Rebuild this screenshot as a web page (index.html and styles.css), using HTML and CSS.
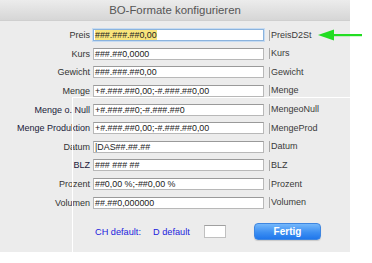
FILE: index.html
```html
<!DOCTYPE html>
<html>
<head>
<meta charset="utf-8">
<link rel="stylesheet" href="styles.css">
</head>
<body>
<div class="window">
  <div class="titlebar">BO-Formate konfigurieren</div>
  <div class="form">
    <div class="lbl">Preis</div><div class="field focus"><span class="sel">###.###.##0,00</span></div><div class="code">PreisD2St</div>
    <div class="lbl">Kurs</div><div class="field">###.##0,0000</div><div class="code">Kurs</div>
    <div class="lbl">Gewicht</div><div class="field">###.###.##0,00</div><div class="code">Gewicht</div>
    <div class="lbl">Menge</div><div class="field">+#.###.##0,00;-#.###.##0,00</div><div class="code">Menge</div>
    <div class="lbl dark">Menge o. Null</div><div class="field">+#.###.##0;-#.###.##0</div><div class="code">MengeoNull</div>
    <div class="lbl dark">Menge Produktion</div><div class="field">+#.###.##0,00;-#.###.##0,00</div><div class="code">MengeProd</div>
    <div class="lbl">Datum</div><div class="field">|DAS##.##.##</div><div class="code">Datum</div>
    <div class="lbl dark">BLZ</div><div class="field">### ### ##</div><div class="code">BLZ</div>
    <div class="lbl">Prozent</div><div class="field">##0,00 %;-##0,00 %</div><div class="code">Prozent</div>
    <div class="lbl">Volumen</div><div class="field">##.##0,000000</div><div class="code">Volumen</div>
  </div>
  <div class="footer">
    <span class="link ch">CH default:</span>
    <span class="link d">D default</span>
    <div class="smallbox"></div>
    <button class="btn">Fertig</button>
  </div>
  <div class="artifact"></div>
</div>
<svg class="arrow" width="44" height="12" viewBox="0 0 44 12">
  <polygon points="0,6 16,0.5 16,11.5" fill="#22dd22"/>
  <rect x="14" y="5" width="30" height="2.2" fill="#22dd22"/>
</svg>
</body>
</html>
```
FILE: styles.css
```css
html, body {
  margin: 0;
  padding: 0;
  background: #ffffff;
}
body {
  width: 372px;
  height: 263px;
  position: relative;
  overflow: hidden;
  font-family: "Liberation Sans", Arial, sans-serif;
}
.window {
  position: relative;
  width: 350px;
  height: 252px;
  background: #ececec;
}
.titlebar {
  height: 21px;
  box-sizing: border-box;
  background: linear-gradient(#ececec, #d6d6d6);
  border-bottom: 1px solid #cfcfcf;
  color: #555555;
  font-size: 11.4px;
  line-height: 20px;
  text-align: center;
}
.form {
  display: grid;
  grid-template-columns: 90px 174px auto;
  grid-auto-rows: 18.63px;
  align-items: center;
  padding-top: 4.7px;
  font-size: 9px;
}
.lbl {
  text-align: right;
  color: #333333;
  white-space: nowrap;
}
.lbl.dark {
  color: #1a1a3a;
}
.field {
  margin-left: 3px;
  height: 12px;
  box-sizing: border-box;
  background: #ffffff;
  border: 1px solid #b8b8b8;
  border-top-color: #9a9a9a;
  padding-left: 1px;
  font-size: 8.9px;
  line-height: 10px;
  color: #222222;
  white-space: nowrap;
  overflow: hidden;
}
.field.focus {
  border: 1px solid #8ab3de;
  box-shadow: 0 0 0 1px #c6dbf1;
}
.sel {
  background: #f8e47c;
}
.code {
  margin-left: 5px;
  border-left: 1px solid #a8a8a8;
  padding-left: 1px;
  height: 11px;
  line-height: 11px;
  color: #3a3a3a;
  white-space: nowrap;
}
.footer {
  display: flex;
  align-items: center;
  height: 17px;
  margin-top: 11.5px;
  padding-left: 95px;
  font-size: 9.2px;
}
.link {
  color: #2222dd;
}
.ch {
  width: 58px;
}
.d {
  width: 51px;
}
.smallbox {
  width: 22px;
  height: 13px;
  box-sizing: border-box;
  background: #ffffff;
  border: 1px solid #c0c0c0;
  border-top-color: #a0a0a0;
}
.btn {
  margin-left: 28px;
  width: 67px;
  height: 17px;
  border: 1px solid #3f86e0;
  border-radius: 4px;
  background: linear-gradient(#75b8fb, #3d8ff2 55%, #1f77ec);
  color: #ffffff;
  font-family: "Liberation Sans", Arial, sans-serif;
  font-weight: bold;
  font-size: 10px;
  padding: 0;
  box-shadow: 0 1px 1px rgba(0,0,0,0.15);
}
.artifact {
  position: absolute;
  left: 72px;
  top: 97px;
  right: 0;
  bottom: 0;
  border-top: 1px solid #ffffff;
  border-left: 1px solid #ffffff;
  pointer-events: none;
}
.arrow {
  position: absolute;
  left: 318px;
  top: 29px;
}
```
